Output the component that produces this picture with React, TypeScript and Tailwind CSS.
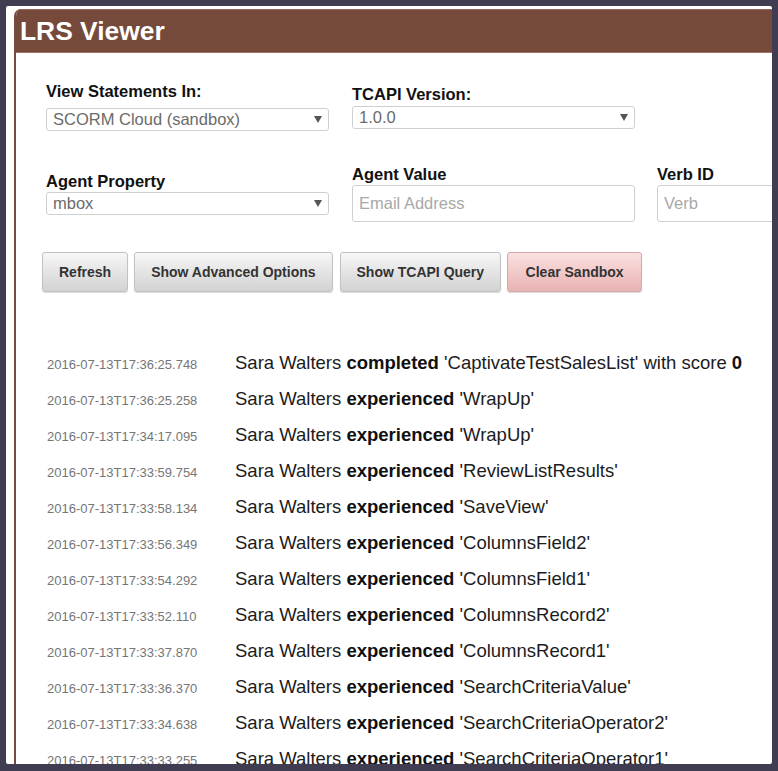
const statements = [
  { time: "2016-07-13T17:36:25.748", verb: "completed", object: "CaptivateTestSalesList", score: "0" },
  { time: "2016-07-13T17:36:25.258", verb: "experienced", object: "WrapUp" },
  { time: "2016-07-13T17:34:17.095", verb: "experienced", object: "WrapUp" },
  { time: "2016-07-13T17:33:59.754", verb: "experienced", object: "ReviewListResults" },
  { time: "2016-07-13T17:33:58.134", verb: "experienced", object: "SaveView" },
  { time: "2016-07-13T17:33:56.349", verb: "experienced", object: "ColumnsField2" },
  { time: "2016-07-13T17:33:54.292", verb: "experienced", object: "ColumnsField1" },
  { time: "2016-07-13T17:33:52.110", verb: "experienced", object: "ColumnsRecord2" },
  { time: "2016-07-13T17:33:37.870", verb: "experienced", object: "ColumnsRecord1" },
  { time: "2016-07-13T17:33:36.370", verb: "experienced", object: "SearchCriteriaValue" },
  { time: "2016-07-13T17:33:34.638", verb: "experienced", object: "SearchCriteriaOperator2" },
  { time: "2016-07-13T17:33:33.255", verb: "experienced", object: "SearchCriteriaOperator1" },
];

function Arrow() {
  return (
    <svg width="8" height="7" viewBox="0 0 8 7" className="shrink-0">
      <path d="M0 0 L8 0 L4 7 Z" fill="#555" />
    </svg>
  );
}

function Select({ value }: { value: string }) {
  return (
    <div className="flex h-[23px] w-[283px] items-center justify-between rounded-[3px] border border-[#cfcfcf] bg-white pl-[6px] pr-[6px] text-[16.5px] leading-none text-[#6b6b6b]">
      <span>{value}</span>
      <Arrow />
    </div>
  );
}

function TextInput({ placeholder }: { placeholder: string }) {
  return (
    <div className="flex h-[37px] w-[283px] items-center rounded-[3px] border border-[#cfcfcf] bg-white pl-[6px] text-[16.5px] leading-none text-[#a8a8a8]">
      {placeholder}
    </div>
  );
}

function Label({ children }: { children: React.ReactNode }) {
  return <div className="h-[20px] text-[16.5px] font-bold leading-[20px] text-[#111]">{children}</div>;
}

function Button({ children, danger }: { children: React.ReactNode; danger?: boolean }) {
  return (
    <button
      className={
        danger
          ? "h-[40px] rounded-[3px] border border-[#d6a9a9] bg-gradient-to-b from-[#fbe1e1] to-[#e8b2b2] px-[17.5px] text-[14px] font-bold text-[#333] shadow-[0_1px_1px_rgba(0,0,0,0.15)]"
          : "h-[40px] rounded-[3px] border border-[#c2c2c2] bg-gradient-to-b from-[#f7f7f7] to-[#d2d2d2] px-[16px] text-[14px] font-bold text-[#333] shadow-[0_1px_1px_rgba(0,0,0,0.15)]"
      }
    >
      {children}
    </button>
  );
}

export default function App() {
  return (
    <div className="h-[771px] w-[778px] bg-[#403d53] pb-[7px] pl-[6px] pr-[6px] pt-[6px] font-['Liberation_Sans',Arial,sans-serif]">
      <div className="h-full w-full overflow-hidden rounded-[2px] bg-white">
        <div className="ml-[8px] mt-[3px] w-[960px] overflow-hidden rounded-tl-[7px] border-l-2 border-[#774a3b]">
          <div className="flex h-[44px] items-center border-b border-t border-b-[#a07262] border-t-[#94685a] bg-[#764a3b] pl-[4px] pt-[1px]">
            <h1 className="text-[26.4px] font-bold leading-none text-white">LRS Viewer</h1>
          </div>

          <div className="pl-[30px]">
            <div className="mt-[28px] flex gap-[23px]">
              <div>
                <Label>View Statements In:</Label>
                <div className="mt-[7px]">
                  <Select value="SCORM Cloud (sandbox)" />
                </div>
              </div>
              <div className="pt-[3px]">
                <Label>TCAPI Version:</Label>
                <div className="mt-[2px]">
                  <Select value="1.0.0" />
                </div>
              </div>
            </div>

            <div className="mt-[33px] flex gap-[23px]">
              <div className="pt-[7px]">
                <Label>Agent Property</Label>
                <div className="mt-[1px]">
                  <Select value="mbox" />
                </div>
              </div>
              <div>
                <Label>Agent Value</Label>
                <div className="mt-[1px]">
                  <TextInput placeholder="Email Address" />
                </div>
              </div>
              <div className="-ml-[1px]">
                <Label>Verb ID</Label>
                <div className="mt-[1px]">
                  <TextInput placeholder="Verb" />
                </div>
              </div>
            </div>

            <div className="-ml-[4px] mt-[30px] flex gap-[6px]">
              <Button>Refresh</Button>
              <Button>Show Advanced Options</Button>
              <div className="ml-[1px]">
                <Button>Show TCAPI Query</Button>
              </div>
              <Button danger>Clear Sandbox</Button>
            </div>

            <div className="mt-[53px]">
              {statements.map((s) => (
                <div key={s.time} className="flex h-[36px] items-baseline pt-[8px]">
                  <div className="w-[189px] shrink-0 pl-[1px] text-[13px] text-[#767676]">{s.time}</div>
                  <div className="text-[18.5px] leading-[20px] text-[#1c1c1c]">
                    Sara Walters <b className="font-bold text-[#111]">{s.verb}</b> '{s.object}'
                    {s.score && (
                      <>
                        {" "}with score <b className="font-bold text-[#111]">{s.score}</b>
                      </>
                    )}
                  </div>
                </div>
              ))}
            </div>
          </div>
        </div>
      </div>
    </div>
  );
}
